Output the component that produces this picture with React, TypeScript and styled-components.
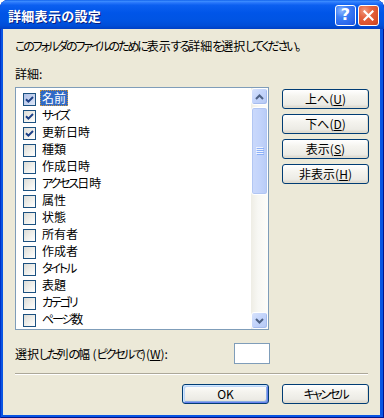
import React from "react";
import styled, { createGlobalStyle } from "styled-components";

const Global = createGlobalStyle`
  html, body { margin: 0; padding: 0; background: #ffffff; }
  body {
    font-family: "Noto Sans CJK JP", "Noto Sans", sans-serif;
    font-size: 12px;
    color: #000;
  }
  * { box-sizing: border-box; }
`;

const Window = styled.div`
  width: 384px;
  height: 418px;
  display: flex;
  flex-direction: column;
  background: #0a55e3;
  border-radius: 8px 8px 0 0;
  overflow: hidden;
  box-shadow: inset 1px 0 0 #0031c6, inset -1px 0 0 #00138c, inset 0 -1px 0 #00138c;
`;

const TitleBar = styled.div`
  height: 29px;
  flex: none;
  display: flex;
  align-items: center;
  justify-content: space-between;
  padding: 0 5px 0 8px;
  background: linear-gradient(
    180deg,
    #0a5ae8 0%,
    #3d8eff 4%,
    #2a78fb 9%,
    #0b5ff0 18%,
    #0055e8 45%,
    #0054e3 70%,
    #004ed8 88%,
    #0040c4 100%
  );
`;

const TitleText = styled.span`
  color: #fff;
  font-weight: bold;
  font-size: 13px;
  letter-spacing: 0.3px;
  text-shadow: 1px 1px 0 #0a1e80;
  margin-top: 1px;
`;

const CaptionButtons = styled.div`
  display: flex;
  gap: 2px;
  margin-top: 1px;
`;

const CaptionButton = styled.div<{ $kind: "help" | "close" }>`
  width: 21px;
  height: 21px;
  border: 1px solid #ffffff;
  border-radius: 3px;
  display: flex;
  align-items: center;
  justify-content: center;
  color: #fff;
  font-family: "DejaVu Sans", sans-serif;
  font-weight: bold;
  font-size: 16px;
  line-height: 1;
  background: ${(p) =>
    p.$kind === "close"
      ? "radial-gradient(circle at 30% 25%, #f29a7e 0%, #e5633f 35%, #d8502a 75%, #c0401c 100%)"
      : "radial-gradient(circle at 30% 25%, #8fb7ff 0%, #3d7ff6 35%, #2a66ec 75%, #1a4fd6 100%)"};
`;

const Frame = styled.div`
  flex: 1;
  display: flex;
  padding: 0 4px 3px 3px;
`;

const Body = styled.div`
  flex: 1;
  background: #ece9d8;
  display: flex;
  flex-direction: column;
  padding: 9px 11px 11px 12px;
`;

const Text = styled.div`
  font-size: 12px;
  line-height: 16px;
  height: 16px;
  white-space: nowrap;
  font-feature-settings: "palt";
`;

const Description = styled(Text)``;

const DetailsLabel = styled(Text)`
  margin-top: 12px;
`;

const Kana = styled.span`
  letter-spacing: -2.1px;
`;

const Key = styled.span`
  text-decoration: underline;
  text-underline-offset: 1px;
`;

const Jp = ({ text }: { text: string }) => (
  <>
    {text.split(/([\u3040-\u30ff]+)/).map((part, i) => {
      if (!part) return null;
      if (/^[\u3040-\u30ff]+$/.test(part)) return <Kana key={i}>{part}</Kana>;
      return <React.Fragment key={i}>{part}</React.Fragment>;
    })}
  </>
);

const MainRow = styled.div`
  margin-top: 5px;
  display: flex;
  gap: 13px;
`;

const ListBox = styled.div`
  width: 254px;
  height: 243px;
  border: 1px solid #7f9db9;
  background: #fff;
  display: flex;
`;

const Rows = styled.div`
  flex: 1;
  padding-top: 1px;
  display: flex;
  flex-direction: column;
`;

const Row = styled.div`
  height: 17px;
  display: flex;
  align-items: flex-end;
  padding-left: 7px;
  gap: 4px;
`;

const CheckBox = styled.span<{ $hot?: boolean }>`
  width: 13px;
  height: 13px;
  flex: none;
  border: 1px solid #1c5180;
  display: flex;
  align-items: center;
  justify-content: center;
  background: ${(p) =>
    p.$hot
      ? "linear-gradient(135deg, #aebfe6 0%, #c9d6f0 60%, #dfe7f7 100%)"
      : "linear-gradient(135deg, #dcdcd7 0%, #f0f0ec 55%, #ffffff 100%)"};
`;

const ItemLabel = styled.span<{ $selected?: boolean }>`
  height: 16px;
  line-height: 16px;
  padding: 0 2px;
  white-space: nowrap;
  font-feature-settings: "palt";
  background: ${(p) => (p.$selected ? "#316ac5" : "transparent")};
  color: ${(p) => (p.$selected ? "#fff" : "#000")};
  outline: ${(p) => (p.$selected ? "1px dotted #ce953a" : "none")};
  outline-offset: -1px;
`;

const ScrollBar = styled.div`
  width: 17px;
  flex: none;
  display: flex;
  flex-direction: column;
  background: linear-gradient(90deg, #eeede5 0%, #f7f7f3 40%, #fdfdfa 100%);
`;

const ScrollButton = styled.div`
  height: 17px;
  flex: none;
  border: 1px solid #fff;
  border-radius: 3px;
  display: flex;
  align-items: center;
  justify-content: center;
  background: linear-gradient(135deg, #d8e3fc 0%, #c3d4fb 45%, #b6c9f4 100%);
  box-shadow: inset -1px -1px 0 #a6bcee;
`;

const Thumb = styled.div`
  margin-top: 2px;
  height: 88px;
  flex: none;
  border: 1px solid #fff;
  border-radius: 3px;
  display: flex;
  align-items: center;
  justify-content: center;
  background: linear-gradient(90deg, #cbd9fb 0%, #c3d4fb 50%, #b8cbf6 100%);
  box-shadow: inset 0 0 0 1px #b1c6f3;
`;

const Track = styled.div`
  flex: 1;
`;

const SideButtons = styled.div`
  margin-top: 2px;
  display: flex;
  flex-direction: column;
  gap: 5px;
`;

const Button = styled.div<{ $default?: boolean }>`
  width: 87px;
  height: 20px;
  border: 1px solid #003c74;
  border-radius: 3px;
  display: flex;
  align-items: center;
  justify-content: center;
  font-size: 12px;
  line-height: 16px;
  white-space: nowrap;
  font-feature-settings: "palt";
  background: linear-gradient(180deg, #ffffff 0%, #f5f4ef 35%, #ecebe5 80%, #d8d3c8 100%);
  box-shadow: ${(p) =>
    p.$default
      ? "inset 1px 1px 0 #cee7ff, inset -1px -1px 0 #6982ee, inset 2px 2px 0 #bcd4f6, inset -2px -2px 0 #89ade4"
      : "inset -1px -1px 0 #e0dccf"};
`;

const WidthRow = styled.div`
  margin-top: 13px;
  width: 255px;
  display: flex;
  align-items: center;
  justify-content: space-between;
`;

const WidthInput = styled.div`
  width: 36px;
  height: 21px;
  border: 1px solid #7f9db9;
  background: #fff;
`;

const Separator = styled.div`
  margin-top: 9px;
  height: 2px;
  border-top: 1px solid #aca899;
  border-bottom: 1px solid #ffffff;
  margin-right: 1px;
`;

const Footer = styled.div`
  margin-top: 9px;
  display: flex;
  justify-content: flex-end;
  gap: 13px;
`;

const Check = () => (
  <svg width="9" height="9" viewBox="0 0 9 9">
    <path d="M1 4.2 L3.4 6.6 L8 2" fill="none" stroke="#1b3f86" strokeWidth="2" />
  </svg>
);

const UpArrow = () => (
  <svg width="9" height="6" viewBox="0 0 9 6">
    <path d="M1 5 L4.5 1.5 L8 5" fill="none" stroke="#4d6185" strokeWidth="2" />
  </svg>
);

const DownArrow = () => (
  <svg width="9" height="6" viewBox="0 0 9 6">
    <path d="M1 1 L4.5 4.5 L8 1" fill="none" stroke="#4d6185" strokeWidth="2" />
  </svg>
);

const Grip = () => (
  <svg width="8" height="8" viewBox="0 0 8 8">
    {[0, 2, 4, 6].map((y) => (
      <g key={y}>
        <rect x="0" y={y} width="7" height="1" fill="#eef3fe" />
        <rect x="1" y={y + 1} width="7" height="1" fill="#8cb0f8" />
      </g>
    ))}
  </svg>
);

const CloseX = () => (
  <svg width="11" height="11" viewBox="0 0 11 11">
    <path d="M1.5 1.5 L9.5 9.5 M9.5 1.5 L1.5 9.5" stroke="#fff" strokeWidth="2.2" strokeLinecap="square" />
  </svg>
);

const items: { label: string; checked: boolean }[] = [
  { label: "名前", checked: true },
  { label: "サイズ", checked: true },
  { label: "更新日時", checked: true },
  { label: "種類", checked: false },
  { label: "作成日時", checked: false },
  { label: "アクセス日時", checked: false },
  { label: "属性", checked: false },
  { label: "状態", checked: false },
  { label: "所有者", checked: false },
  { label: "作成者", checked: false },
  { label: "タイトル", checked: false },
  { label: "表題", checked: false },
  { label: "カテゴリ", checked: false },
  { label: "ページ数", checked: false },
];

export default function App() {
  return (
    <>
      <Global />
      <Window>
        <TitleBar>
          <TitleText>詳細表示の設定</TitleText>
          <CaptionButtons>
            <CaptionButton $kind="help">?</CaptionButton>
            <CaptionButton $kind="close">
              <CloseX />
            </CaptionButton>
          </CaptionButtons>
        </TitleBar>
        <Frame>
          <Body>
            <Description>
              <Jp text="このフォルダのファイルのために表示する詳細を選択してください。" />
            </Description>
            <DetailsLabel>詳細:</DetailsLabel>
            <MainRow>
              <ListBox>
                <Rows>
                  {items.map((it, i) => (
                    <Row key={it.label}>
                      <CheckBox $hot={i === 0}>{it.checked && <Check />}</CheckBox>
                      <ItemLabel $selected={i === 0}>
                        <Jp text={it.label} />
                      </ItemLabel>
                    </Row>
                  ))}
                </Rows>
                <ScrollBar>
                  <ScrollButton>
                    <UpArrow />
                  </ScrollButton>
                  <Thumb>
                    <Grip />
                  </Thumb>
                  <Track />
                  <ScrollButton>
                    <DownArrow />
                  </ScrollButton>
                </ScrollBar>
              </ListBox>
              <SideButtons>
                <Button>
                  上へ(<Key>U</Key>)
                </Button>
                <Button>
                  下へ(<Key>D</Key>)
                </Button>
                <Button>
                  表示(<Key>S</Key>)
                </Button>
                <Button>
                  非表示(<Key>H</Key>)
                </Button>
              </SideButtons>
            </MainRow>
            <WidthRow>
              <Text>
                <Jp text="選択した列の幅 (ピクセルで)" />(<Key>W</Key>):
              </Text>
              <WidthInput />
            </WidthRow>
            <Separator />
            <Footer>
              <Button $default>OK</Button>
              <Button>
                <Jp text="キャンセル" />
              </Button>
            </Footer>
          </Body>
        </Frame>
      </Window>
    </>
  );
}
